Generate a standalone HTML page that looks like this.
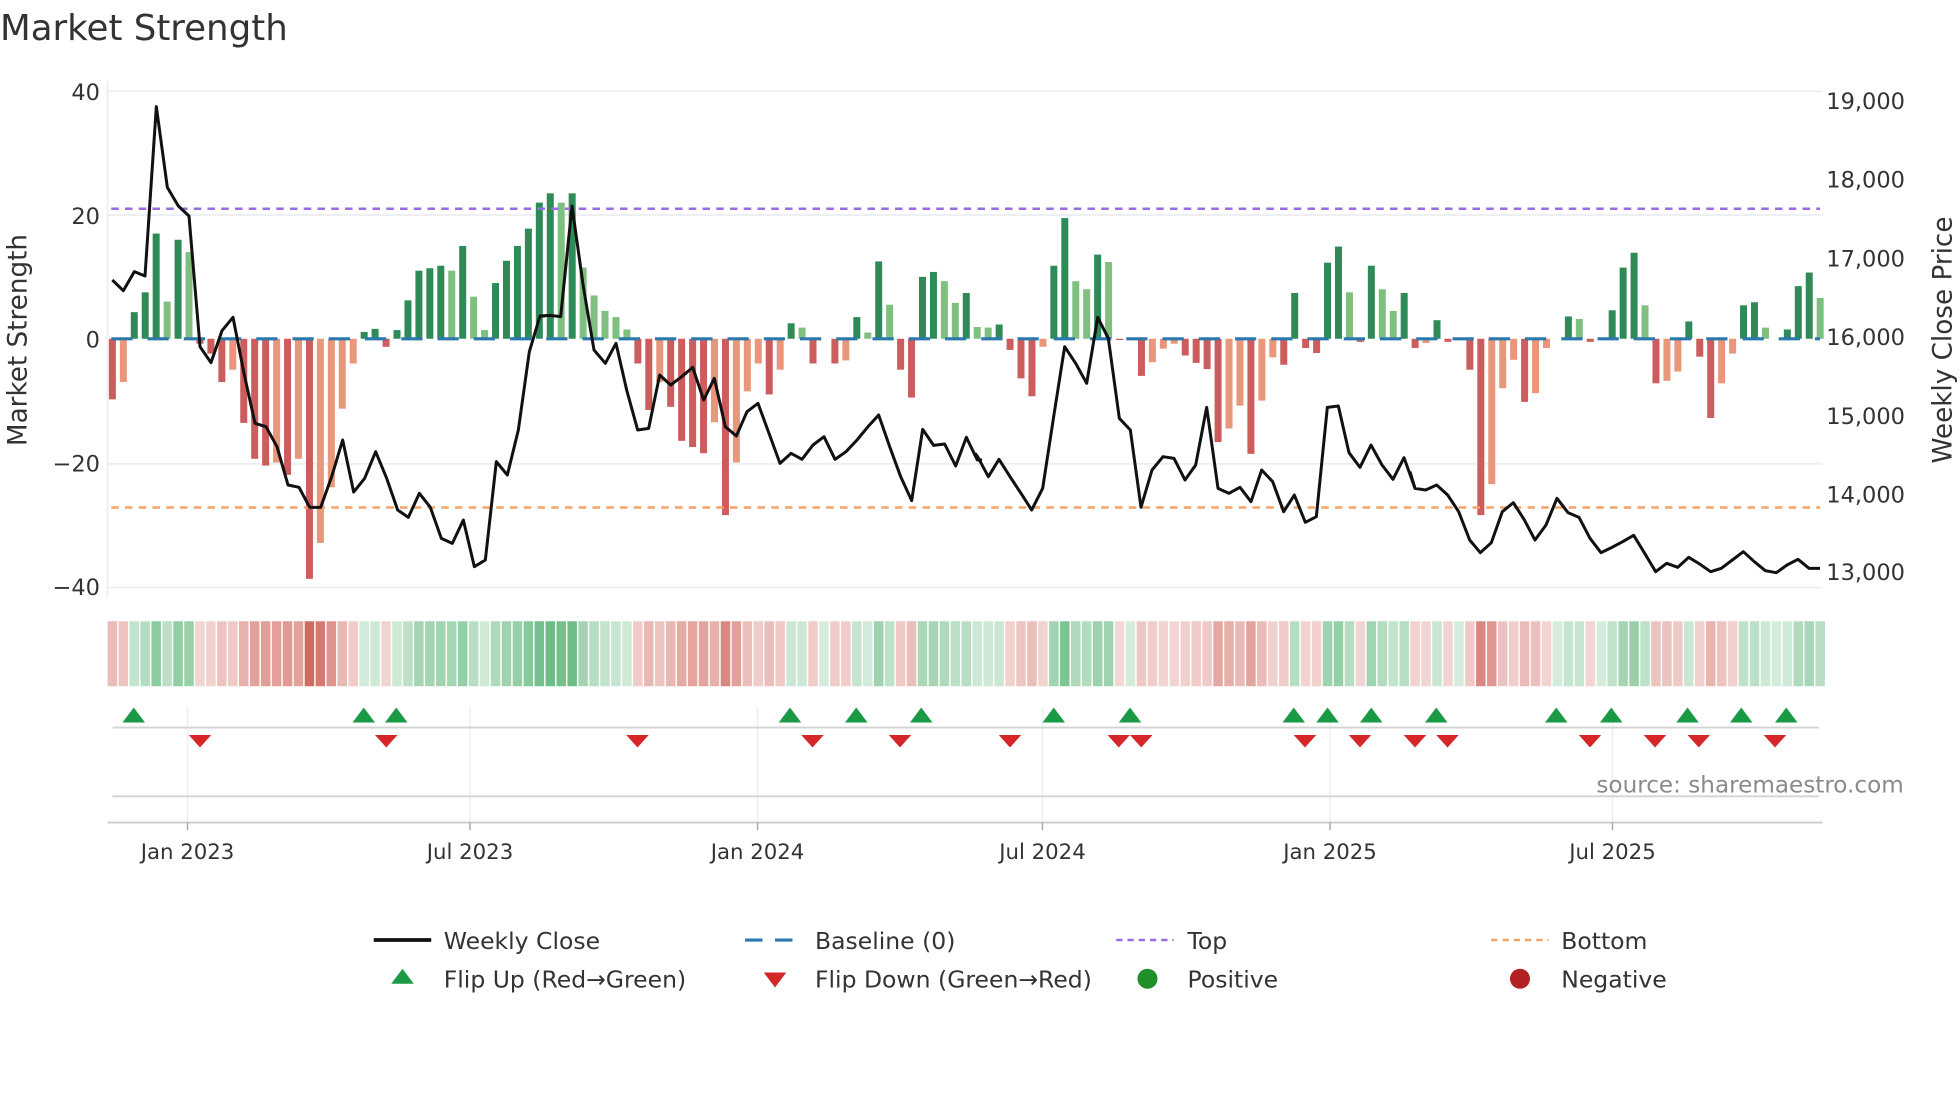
<!DOCTYPE html>
<html><head><meta charset="utf-8"><style>
html,body{margin:0;padding:0;background:#fff;}
svg{display:block;font-family:"DejaVu Sans","Liberation Sans",sans-serif;}
</style></head><body>
<svg id="s" width="1960" height="1102" viewBox="0 0 1568 881.6" xmlns="http://www.w3.org/2000/svg">
<rect width="1568" height="881.6" fill="#fff"/>
<text x="0" y="32" font-size="28.5" fill="#333">Market Strength</text>
<g stroke="#eceff2" stroke-width="1.5">
<line x1="86" y1="73" x2="1458" y2="73"/>
<line x1="86" y1="172" x2="1458" y2="172"/>
<line x1="86" y1="371" x2="1458" y2="371"/>
<line x1="86" y1="470" x2="1458" y2="470"/>
<line x1="86" y1="65" x2="86" y2="478"/>
</g>
<g font-size="18" fill="#333" text-anchor="end">
<text x="80" y="80">40</text>
<text x="80" y="179">20</text>
<text x="80" y="278">0</text>
<text x="80" y="377">−20</text>
<text x="80" y="476">−40</text>
</g>
<g font-size="18" fill="#333">
<text x="1461" y="87">19,000</text>
<text x="1461" y="150">18,000</text>
<text x="1461" y="213">17,000</text>
<text x="1461" y="276">16,000</text>
<text x="1461" y="339">15,000</text>
<text x="1461" y="402">14,000</text>
<text x="1461" y="464">13,000</text>
</g>
<text transform="translate(21,272) rotate(-90)" font-size="21" fill="#333" text-anchor="middle">Market Strength</text>
<text transform="translate(1561,272) rotate(-90)" font-size="21" fill="#333" text-anchor="middle">Weekly Close Price</text>
<g id="bars"></g>
<line x1="89" y1="271" x2="1456" y2="271" stroke="#2b78ad" stroke-width="2.5" stroke-dasharray="17 12"/>
<line x1="89" y1="167" x2="1456" y2="167" stroke="#9b6ce0" stroke-width="2" stroke-dasharray="6 5"/>
<line x1="89" y1="406" x2="1456" y2="406" stroke="#f0a468" stroke-width="2" stroke-dasharray="6 5"/>
<g fill="none" stroke="#111" stroke-width="3" stroke-linejoin="round">
<g transform="translate(84,64) scale(0.26667)"><polyline vector-effect="non-scaling-stroke" points="22,600 55,632 88,575 120,588 154,80 187,322 220,378 252,408 285,800 318,848 351,752 384,712 417,880 450,1030 483,1040 516,1100 549,1215 582,1222 614,1282 647,1282 680,1190 713,1080 746,1236 779,1195 812,1115 845,1195 878,1290 910,1312 943,1240 976,1282 1009,1375 1042,1390 1075,1320 1108,1460 1141,1440 1174,1145 1207,1185 1240,1050 1273,815 1305,708 1320,708"/></g>
<g transform="translate(432,64) scale(0.26667)"><polyline vector-effect="non-scaling-stroke" points="0,708 30,706 62,710 96,378 130,620 162,810 196,850 228,790 260,930 293,1050 326,1045 359,885 392,915 425,890 458,862 491,960 523,895 556,1040 589,1068 621,995 654,970 687,1060 720,1150 753,1120 786,1138 819,1095 852,1070 885,1138 918,1115 951,1080 984,1040 1016,1005 1049,1100 1082,1190 1115,1262 1148,1048 1181,1096 1214,1092 1247,1158 1279,1072 1312,1140 1326,1140"/></g>
<g transform="translate(780,64) scale(0.26667)"><polyline vector-effect="non-scaling-stroke" points="0,1120 8,1130 40,1190 72,1138 105,1190 138,1240 170,1290 203,1225 236,1010 269,800 302,850 335,910 368,712 400,775 433,1015 466,1050 498,1282 531,1170 564,1130 597,1135 630,1200 662,1155 695,982 729,1225 762,1240 795,1222 828,1265 860,1170 893,1205 926,1295 958,1245 991,1327 1024,1310 1057,982 1090,978 1122,1118 1155,1162 1188,1095 1221,1155 1254,1198 1287,1133 1320,1225"/></g>
<g transform="translate(1128,64) scale(0.26667)"><polyline vector-effect="non-scaling-stroke" points="0,1175 15,1225 47,1230 80,1215 113,1245 146,1295 179,1380 211,1418 244,1388 277,1295 310,1268 342,1318 375,1380 408,1335 441,1255 474,1298 507,1312 540,1375 573,1418 606,1402 638,1385 671,1366 704,1420 737,1475 770,1450 803,1462 836,1432 869,1452 902,1475 934,1465 967,1440 1000,1415 1033,1445 1066,1472 1099,1478 1131,1455 1164,1438 1197,1465 1230,1465"/></g>
</g>
<g id="heat"></g>
<g stroke="#eceff2" stroke-width="1.2">
<line x1="150" y1="566" x2="150" y2="658"/><line x1="376" y1="566" x2="376" y2="658"/>
<line x1="606" y1="566" x2="606" y2="658"/><line x1="834" y1="566" x2="834" y2="658"/>
<line x1="1064" y1="566" x2="1064" y2="658"/><line x1="1290" y1="566" x2="1290" y2="658"/>
</g>
<line x1="90" y1="582" x2="1455" y2="582" stroke="#d3d3d3" stroke-width="1.5"/>
<line x1="90" y1="637" x2="1455" y2="637" stroke="#d3d3d3" stroke-width="1.5"/>
<line x1="86" y1="658" x2="1458" y2="658" stroke="#ccc" stroke-width="1.5"/>
<g stroke="#aaa" stroke-width="1.2">
<line x1="150" y1="658" x2="150" y2="664"/><line x1="376" y1="658" x2="376" y2="664"/>
<line x1="606" y1="658" x2="606" y2="664"/><line x1="834" y1="658" x2="834" y2="664"/>
<line x1="1064" y1="658" x2="1064" y2="664"/><line x1="1290" y1="658" x2="1290" y2="664"/>
</g>
<g id="tri"></g>
<text x="1523" y="634" font-size="18.5" fill="#8a8a8a" text-anchor="end">source: sharemaestro.com</text>
<g font-size="17" fill="#333" text-anchor="middle">
<text x="150" y="687">Jan 2023</text><text x="376" y="687">Jul 2023</text>
<text x="606" y="687">Jan 2024</text><text x="834" y="687">Jul 2024</text>
<text x="1064" y="687">Jan 2025</text><text x="1290" y="687">Jul 2025</text>
</g>
<g font-size="18.8" fill="#333">
<line x1="299" y1="752" x2="345" y2="752" stroke="#111" stroke-width="3"/>
<text x="355" y="759">Weekly Close</text>
<line x1="596" y1="752" x2="642" y2="752" stroke="#2b78ad" stroke-width="2.5" stroke-dasharray="14 10"/>
<text x="652" y="759">Baseline (0)</text>
<line x1="893" y1="752" x2="939" y2="752" stroke="#9b6ce0" stroke-width="2" stroke-dasharray="5 4"/>
<text x="950" y="759">Top</text>
<line x1="1193" y1="752" x2="1239" y2="752" stroke="#f0a468" stroke-width="2" stroke-dasharray="5 4"/>
<text x="1249" y="759">Bottom</text>
<polygon points="313,787 331,787 322,775" fill="#1a9a45"/>
<text x="355" y="790">Flip Up (Red→Green)</text>
<polygon points="611,778 629,778 620,790" fill="#d62728"/>
<text x="652" y="790">Flip Down (Green→Red)</text>
<circle cx="918" cy="783" r="8" fill="#1f8f2a"/>
<text x="950" y="790">Positive</text>
<circle cx="1216" cy="783" r="8" fill="#b22222"/>
<text x="1249" y="790">Negative</text>
</g>
</svg>
<script>
var V=[-9.8,-7,4.3,7.5,17,6,16,14,-0.8,-2.4,-7,-5,-13.6,-19.4,-20.5,-20,-22,-19.4,-38.8,-33,-24,-11.3,-4,1.1,1.6,-1.3,1.4,6.2,11,11.4,11.8,11,15,6.8,1.4,9,12.6,15,17.8,22,23.5,22,23.5,11.5,7,4.5,3.5,1.5,-4,-11.5,-7,-11,-16.5,-17.5,-18.5,-13.5,-28.5,-20,-8.5,-4,-9,-5,2.5,1.8,-4,0,-4,-3.5,3.5,1,12.5,5.5,-5,-9.5,10,10.8,9.3,5.8,7.4,1.9,1.8,2.3,-1.8,-6.4,-9.3,-1.3,11.8,19.5,9.3,8,13.6,12.4,-0.2,0,-6,-3.8,-1.6,-0.8,-2.7,-3.9,-4.9,-16.7,-14.5,-10.8,-18.6,-10,-3,-4.2,7.4,-1.5,-2.3,12.3,14.9,7.5,-0.5,11.8,8,4.5,7.4,-1.5,-0.7,3,-0.5,0,-5,-28.5,-23.5,-8,-3.4,-10.2,-8.8,-1.5,0,3.6,3.2,-0.5,0,4.6,11.5,13.9,5.4,-7.2,-6.8,-5.3,2.8,-2.9,-12.8,-7.2,-2.4,5.4,5.9,1.8,0,1.5,8.5,10.7,6.6];
var L=["dldddldldd","dldddldldl","lll"+"ddddddd","dldllddddd","dldllllldd","lddddldlll","dldldxdldl","dlddddlldl","lddddlddll","dldxdllldd","ddlldllddd","dddlddlldd","lddxddllld","llxdldxddd","ldlldddlld","dlxdddl"].join("");
var NS="http://www.w3.org/2000/svg";
function el(p,t,a){var e=document.createElementNS(NS,t);for(var k in a)e.setAttribute(k,a[k]);p.appendChild(e);return e;}
var b=document.getElementById('bars'),h=document.getElementById('heat'),tr=document.getElementById('tri');
for(var i=0;i<V.length;i++){var x=89.9+8.758*i,v=V[i],l=L[i]=='l';
 if(Math.abs(v)>0.05){var y0=271,y1=271-v*4.95;
  var c=v>0?(l?'#7fbf7f':'#2e8b57'):(l?'#e9967a':'#cd5c5c');
  el(b,'rect',{x:x-2.8,y:Math.min(y0,y1),width:5.6,height:Math.abs(y1-y0),fill:c});}
 var a,col;
 if(v>=0){a=0.2+0.5*Math.min(1,v/24);col='46,160,80';}else{a=0.2+0.55*Math.min(1,-v/39);col='192,57,43';}
 el(h,'rect',{x:x-3.8,y:497,width:7.6,height:52,fill:'rgba('+col+','+a.toFixed(2)+')'});}
var up=[107,291,317,632,685,737,843,904,1035,1062,1097,1149,1245,1289,1350,1393,1429];
var dn=[160,309,510,650,720,808,895,913,1044,1088,1132,1158,1272,1324,1359,1420];
up.forEach(function(x){el(tr,'polygon',{points:(x-9)+',578 '+(x+9)+',578 '+x+',566',fill:'#1a9a45'});});
dn.forEach(function(x){el(tr,'polygon',{points:(x-9)+',588 '+(x+9)+',588 '+x+',598',fill:'#d62728'});});
</script>
</body></html>
